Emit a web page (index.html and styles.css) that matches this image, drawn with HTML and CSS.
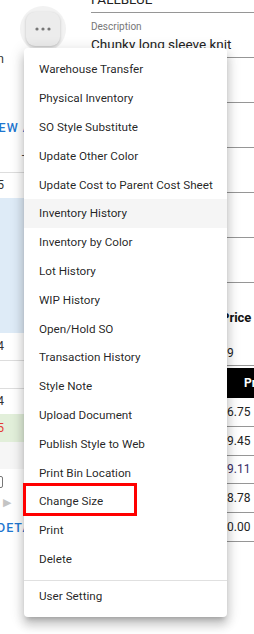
FILE: index.html
```html
<!DOCTYPE html>
<html>
  <head>
    <meta charset="UTF-8">
    <title>Style Detail</title>
    <link rel="stylesheet" href="styles.css">
  </head>
  <body>
    <div class="page">
      <div class="side">
        <div class="side-inner">
          <div class="side-label">Season</div>
          <div class="side-link">VIEW ALL</div>
          <div class="side-head"><span class="dash">-</span></div>
          <div class="side-row">15</div>
          <div class="side-row selected"></div>
          <div class="side-row lined">24</div>
          <div class="side-row lined"></div>
          <div class="side-row">14</div>
          <div class="side-row ok"><span class="neg">-5</span></div>
          <div class="side-row muted"></div>
          <div class="side-check"><span class="box"></span></div>
          <div class="side-pager">&#9654;</div>
          <div class="side-link details">DETAILS</div>
        </div>
      </div>

      <div class="main">
        <div class="top">
          <div class="more">
            <div class="more-btn">
              <svg width="16" height="4" viewBox="0 0 16 4">
                <circle cx="2" cy="2" r="1.6" fill="#777"/>
                <circle cx="8" cy="2" r="1.6" fill="#777"/>
                <circle cx="14" cy="2" r="1.6" fill="#777"/>
              </svg>
            </div>
          </div>
          <div class="fields">
            <div class="field"><div class="field-label">Color</div><div class="field-value">FALLBLUE</div></div>
            <div class="field"><div class="field-label">Description</div><div class="field-value">Chunky long sleeve knit</div></div>
            <div class="field"><div class="field-label">Category</div><div class="field-value">Sweaters</div></div>
            <div class="field"><div class="field-label">Fabric</div><div class="field-value">Cotton blend</div></div>
            <div class="field"><div class="field-label">Division</div><div class="field-value">Womens</div></div>
            <div class="field"><div class="field-label">Season</div><div class="field-value">Fall 2023</div></div>
            <div class="field"><div class="field-label">Vendor</div><div class="field-value">Knitworks</div></div>
          </div>
        </div>

        <div class="prices">
          <div class="price-title"><span>Cost</span><span>Price</span></div>
          <div class="price-sum"><span>Total</span><span>9</span></div>
          <div class="price-table">
            <div class="price-head"><span>Size</span><span class="center">Price</span></div>
            <div class="price-row"><span>XS</span><span>6.75</span></div>
            <div class="price-row"><span>S</span><span>9.45</span></div>
            <div class="price-row"><span>M</span><span class="link">9.11</span></div>
            <div class="price-row"><span>L</span><span>8.78</span></div>
            <div class="price-row"><span>XL</span><span>0.00</span></div>
          </div>
        </div>
      </div>
    </div>

    <div class="menu">
      <div class="menu-group">
        <div class="menu-item">Warehouse Transfer</div>
        <div class="menu-item">Physical Inventory</div>
        <div class="menu-item">SO Style Substitute</div>
        <div class="menu-item">Update Other Color</div>
        <div class="menu-item">Update Cost to Parent Cost Sheet</div>
        <div class="menu-item active">Inventory History</div>
        <div class="menu-item">Inventory by Color</div>
        <div class="menu-item">Lot History</div>
        <div class="menu-item">WIP History</div>
        <div class="menu-item">Open/Hold SO</div>
        <div class="menu-item">Transaction History</div>
        <div class="menu-item">Style Note</div>
        <div class="menu-item">Upload Document</div>
        <div class="menu-item">Publish Style to Web</div>
        <div class="menu-item">Print Bin Location</div>
        <div class="menu-item flagged">Change Size</div>
        <div class="menu-item">Print</div>
        <div class="menu-item">Delete</div>
      </div>
      <div class="menu-divider"></div>
      <div class="menu-item">User Setting</div>
    </div>
  </body>
</html>
```

FILE: styles.css
```css
body {
  margin: 0;
  font-family: Roboto, "Noto Sans", sans-serif;
  background-color: #fff;
  color: #222;
  overflow: hidden;
}

.page {
  display: flex;
  width: 254px;
  height: 634px;
  overflow: hidden;
}

/* left table, mostly covered by the menu */
.side {
  width: 24px;
  flex-shrink: 0;
  overflow: hidden;
}

.side-inner {
  width: 84px;
  margin-left: -60px;
  font-size: 12px;
  color: #333;
}

.side-label {
  margin-top: 51px;
  line-height: 16px;
  text-align: right;
  padding-right: 20px;
}

.side-link {
  margin-top: 53px;
  margin-left: 45px;
  line-height: 16px;
  white-space: nowrap;
  color: #1f77d0;
  font-size: 12.5px;
  font-weight: 500;
  letter-spacing: 1px;
}

.side-link.details {
  margin-top: 8px;
  margin-left: 57px;
}

.side-head {
  margin-top: 5px;
  height: 32px;
  box-sizing: border-box;
  border-bottom: 1px solid #ddd;
  padding-top: 6px;
  line-height: 16px;
  text-align: right;
}

.dash {
  display: inline-block;
  margin-right: -1px;
  color: #444;
}

.side-row {
  height: 25px;
  line-height: 25px;
  text-align: right;
  padding-right: 20px;
  box-sizing: border-box;
}

.side-row.selected {
  height: 135px;
  background-color: #deebf7;
}

.side-row.lined {
  height: 28px;
  line-height: 27px;
  border-bottom: 1px solid #ddd;
}

.side-row.ok {
  height: 28px;
  line-height: 28px;
  background-color: #e2efda;
}

.side-row.muted {
  height: 27px;
  background-color: #f6f6f6;
}

.neg {
  color: #e53935;
}

.side-check {
  height: 25px;
  display: flex;
  align-items: center;
  justify-content: flex-end;
  padding-right: 21px;
}

.box {
  width: 10px;
  height: 10px;
  border: 1px solid #777;
  border-radius: 2px;
}

.side-pager {
  height: 18px;
  line-height: 18px;
  font-size: 11px;
  text-align: right;
  padding-right: 13px;
  color: #c4c4c4;
}

/* main form */
.main {
  flex: 1;
  min-width: 0;
}

.top {
  display: flex;
  align-items: flex-start;
}

.more {
  width: 46px;
  height: 46px;
  margin: 6px 0 0 -4px;
  flex-shrink: 0;
  border-radius: 50%;
  background-color: #f2f2f2;
  display: flex;
  align-items: center;
  justify-content: center;
}

.more-btn {
  width: 34px;
  height: 34px;
  border-radius: 9px;
  background-color: #ececec;
  box-shadow: 0 1px 3px rgba(0,0,0,0.22);
  display: flex;
  align-items: center;
  justify-content: center;
}

.fields {
  flex: 1;
  margin: -32px 0 0 25px;
}

.field {
  padding: 8px 0 5px;
  border-bottom: 1px solid #969696;
}

.field-label {
  font-size: 10px;
  line-height: 12px;
  color: #777;
}

.field-value {
  margin-top: 3px;
  font-size: 13.5px;
  line-height: 16px;
  white-space: nowrap;
}

.prices {
  width: 198px;
  margin-left: 67px;
  font-size: 12px;
}

.price-title {
  display: grid;
  grid-template-columns: 130px auto;
  margin-top: 25px;
  line-height: 20px;
  font-size: 13px;
  font-weight: bold;
  color: #111;
}

.price-sum,
.price-head,
.price-row {
  display: grid;
  grid-template-columns: 136px 62px;
  align-items: center;
  box-sizing: border-box;
}

.price-sum {
  margin-top: 13px;
  height: 25px;
  border-bottom: 1px solid #969696;
}

.price-table {
  margin-top: 2px;
}

.price-head {
  height: 30px;
  background-color: #000;
  color: #fff;
  font-weight: bold;
}

.price-head .center {
  text-align: center;
}

.price-row {
  height: 28.8px;
  border-bottom: 1px solid #969696;
}

.price-row .link {
  color: #3a2d66;
}

/* popup menu */
.menu {
  position: absolute;
  top: 48px;
  left: 24px;
  width: 203px;
  padding: 7px 0;
  background-color: #fff;
  border-radius: 4px;
  box-shadow: 0 5px 5px -3px rgba(0,0,0,0.2), 0 8px 10px 1px rgba(0,0,0,0.14), 0 3px 14px 2px rgba(0,0,0,0.12);
}

.menu-group {
  padding-bottom: 7px;
}

.menu-item {
  height: 28.8px;
  padding: 0 15px;
  display: flex;
  align-items: center;
  font-size: 11.7px;
  color: rgba(0,0,0,0.87);
  white-space: nowrap;
}

.menu-item.active {
  background-color: #f5f5f5;
}

.menu-item.flagged {
  position: relative;
}

.menu-item.flagged::after {
  content: '';
  position: absolute;
  left: -1px;
  top: -4px;
  width: 114px;
  height: 33px;
  box-sizing: border-box;
  border: 3px solid #f00;
}

.menu-divider {
  height: 1px;
  background-color: #e0e0e0;
}
```
